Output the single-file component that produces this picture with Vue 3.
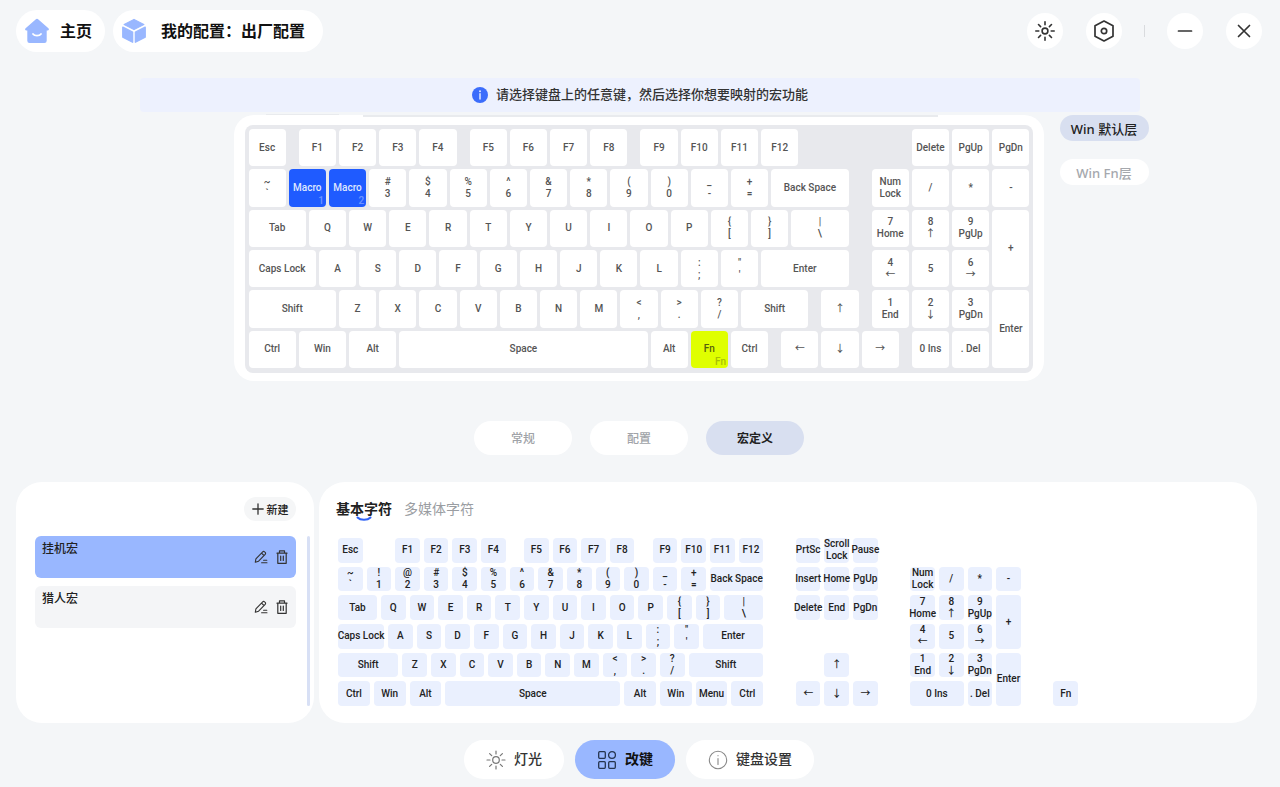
<template>
  <div class="page">
    <header class="topbar">
      <button class="pill home">
        <svg width="26" height="26" viewBox="0 0 26 26">
          <path d="M11.600 1.400a2 2 0 0 1 2.800 0l10 8.800c1 .9.5 2.200-.8 2.200h-.9v10.300a2.300 2.300 0 0 1-2.300 2.300H5.600a2.300 2.300 0 0 1-2.300-2.300V12.400h-.9c-1.300 0-1.800-1.300-.8-2.200z" fill="#99b7ff" />
          <path d="M9 16c1.500 2.200 6.500 2.200 8 0" fill="none" stroke="#fff" stroke-width="1.800" stroke-linecap="round" />
        </svg>
        <span>主页</span>
      </button>
      <button class="pill profile">
        <svg width="26" height="26" viewBox="0 0 26 26" fill="#99b7ff" stroke="#99b7ff" stroke-width="1.400" stroke-linejoin="round">
          <path d="M13 1.500l9.800 5L13 11.500 3.200 6.500z" />
          <path d="M1.800 9.200l9.800 5v10l-9.800-5z" />
          <path d="M24.200 9.200l-9.800 5v10l9.800-5z" />
        </svg>
        <span>我的配置：出厂配置</span>
      </button>
      <div class="window-btns">
        <button class="round" aria-label="主题">
          <svg width="20" height="20" viewBox="0 0 20 20" fill="none" stroke="#333" stroke-width="1.600" stroke-linecap="round">
            <circle cx="10" cy="10" r="2.900" />
            <path d="M10 .8v3M10 16.200v3M.8 10h3M16.200 10h3M3.500 3.500l2.100 2.100M14.400 14.400l2.100 2.100M3.500 16.500l2.100-2.100M14.400 5.600l2.100-2.100" />
          </svg>
        </button>
        <button class="round" aria-label="设置">
          <svg width="22" height="22" viewBox="0 0 22 22" fill="none" stroke="#333" stroke-width="1.700" stroke-linejoin="round">
            <path d="M11 1l9 4.800v10.400L11 21l-9-4.800V5.800z" />
            <circle cx="11" cy="11" r="2.700" />
          </svg>
        </button>
        <span class="divider"></span>
        <button class="round" aria-label="最小化">
          <svg width="16" height="16" viewBox="0 0 16 16" stroke="#333" stroke-width="1.700" stroke-linecap="round">
            <path d="M1.500 8h13" />
          </svg>
        </button>
        <button class="round" aria-label="关闭">
          <svg width="16" height="16" viewBox="0 0 16 16" stroke="#333" stroke-width="1.700" stroke-linecap="round">
            <path d="M2.500 2.500l11 11M13.500 2.500l-11 11" />
          </svg>
        </button>
      </div>
    </header>

    <div class="banner">
      <svg width="16" height="16" viewBox="0 0 16 16">
        <circle cx="8" cy="8" r="8" fill="#3c6dfb" />
        <circle cx="8" cy="4.300" r="1" fill="#dfe8ff" />
        <path d="M8 6.800v5.200" stroke="#dfe8ff" stroke-width="1.500" stroke-linecap="round" />
      </svg>
      <span>请选择键盘上的任意键，然后选择你想要映射的宏功能</span>
    </div>

    <section class="stage">
      <div class="case">
        <div class="board">
          <button
            v-for="(k, i) in mainKeys"
            :key="i"
            class="key"
            :class="k.type"
            :style="place(k)"
          >
            <span>{{ k.label }}</span><span v-if="k.tag" class="tag">{{ k.tag }}</span>
          </button>
        </div>
      </div>
      <div class="layers">
        <button
          v-for="l in layers"
          :key="l"
          :class="{ active: layer === l }"
          @click="layer = l"
        >
          {{ l }}
        </button>
      </div>
    </section>

    <div class="modes">
      <button v-for="m in modes" :key="m" :class="{ active: mode === m }" @click="mode = m">
        {{ m }}
      </button>
    </div>

    <div class="panels">
      <section class="panel macros">
        <button class="add">
          <svg width="12" height="12" viewBox="0 0 12 12" stroke="#333" stroke-width="1.300" stroke-linecap="round">
            <path d="M6 .8v10.400M.8 6h10.400" />
          </svg>
          <span>新建</span>
        </button>
        <div class="macro-body">
          <ul class="macro-list">
            <li
              v-for="m in macros"
              :key="m"
              :class="{ active: macro === m }"
              @click="macro = m"
            >
              <span class="name">{{ m }}</span>
              <button class="icon-btn" aria-label="编辑">
                <svg width="14" height="14" viewBox="0 0 14 14" fill="none" stroke="#333" stroke-width="1.100" stroke-linejoin="round" stroke-linecap="round">
                  <path d="M1.300 12.300l.6-3.500 6.800-7a1.300 1.300 0 0 1 1.900 0l.6.6a1.300 1.300 0 0 1 0 1.900l-6.600 6.900zM7.600 3.200l2.300 2.300M9.600 10.300h3.200M7.600 12.700h5.400" />
                </svg>
              </button>
              <button class="icon-btn" aria-label="删除">
                <svg width="14" height="14" viewBox="0 0 14 14" fill="none" stroke="#333" stroke-width="1.200" stroke-linejoin="round" stroke-linecap="round">
                  <path d="M2 3.200h10M4.500 3V.8h5V3M2.800 3.400v9.900h8.400V3.400M5.700 6v4.500M8.300 6v4.500" />
                </svg>
              </button>
            </li>
          </ul>
          <div class="scrollbar"></div>
        </div>
      </section>

      <section class="panel chars">
        <div class="char-tabs">
          <button
            v-for="t in charTabs"
            :key="t"
            :class="{ active: charTab === t }"
            @click="charTab = t"
          >
            {{ t }}
            <svg v-if="charTab === t" class="smile" width="16" height="6" viewBox="0 0 16 6">
              <path d="M1.500 1.500c3 3 10 3 13 0" fill="none" stroke="#2f62f5" stroke-width="2" stroke-linecap="round" />
            </svg>
          </button>
        </div>
        <div class="picker">
          <button v-for="(k, i) in pickerKeys" :key="i" class="key" :style="place(k)">
            <span>{{ k.label }}</span>
          </button>
        </div>
      </section>
    </div>

    <nav class="bottom">
      <button>
        <svg width="20" height="20" viewBox="0 0 20 20" fill="none" stroke="#777" stroke-width="1.200" stroke-linecap="round">
          <circle cx="10" cy="10" r="3.300" />
          <path d="M10 1v3M10 16v3M1 10h3M16 10h3M3.600 3.600l2.100 2.100M14.300 14.300l2.100 2.100M3.600 16.400l2.100-2.100M14.300 5.700l2.100-2.100" />
        </svg>
        <span>灯光</span>
      </button>
      <button class="active">
        <svg width="20" height="20" viewBox="0 0 20 20" fill="none" stroke="#26344f" stroke-width="1.300">
          <rect x="1.700" y="1.700" width="6.600" height="6.600" rx="1" />
          <circle cx="15" cy="5" r="3.400" />
          <rect x="1.700" y="11.700" width="6.600" height="6.600" rx="1" />
          <rect x="11.700" y="11.700" width="6.600" height="6.600" rx="1" />
        </svg>
        <span>改键</span>
      </button>
      <button>
        <svg width="20" height="20" viewBox="0 0 20 20" fill="none" stroke="#888" stroke-width="1.100" stroke-linecap="round">
          <circle cx="10" cy="10" r="8.700" />
          <path d="M10 8.500v6M10 5.500v.3" />
        </svg>
        <span>键盘设置</span>
      </button>
    </nav>
  </div>
</template>

<script setup>
import { ref } from 'vue'

const layers = ['Win 默认层', 'Win Fn层']
const layer = ref(layers[0])

const modes = ['常规', '配置', '宏定义']
const mode = ref('宏定义')

const macros = ['挂机宏', '猎人宏']
const macro = ref('挂机宏')

const charTabs = ['基本字符', '多媒体字符']
const charTab = ref('基本字符')

// a number is an empty gap, a string is a 1u key, an array is [label, width, options]
const mainRows = [
  ['Esc', 0.25, 'F1', 'F2', 'F3', 'F4', 0.25, 'F5', 'F6', 'F7', 'F8', 0.25, 'F9', 'F10', 'F11', 'F12', 2.75, 'Delete', 'PgUp', 'PgDn'],
  ['~\n`', ['Macro', 1, { type: 'macro', tag: '1' }], ['Macro', 1, { type: 'macro', tag: '2' }], '#\n3', '$\n4', '%\n5', '^\n6', '&\n7', '*\n8', '(\n9', ')\n0', '_\n-', '+\n=', ['Back Space', 2], 0.5, 'Num\nLock', '/', '*', '-'],
  [['Tab', 1.5], ...'QWERTYUIOP', '{\n[', '}\n]', ['|\n\\', 1.5], 0.5, '7\nHome', '8\n↑', '9\nPgUp', ['+', 1, { h: 2 }]],
  [['Caps Lock', 1.75], ...'ASDFGHJKL', ':\n;', '"\n\'', ['Enter', 2.25], 0.5, '4\n←', '5', '6\n→'],
  [['Shift', 2.25], ...'ZXCVBNM', '<\n,', '>\n.', '?\n/', ['Shift', 1.75], 0.25, '↑', 0.25, '1\nEnd', '2\n↓', '3\nPgDn', ['Enter', 1, { h: 2 }]],
  [['Ctrl', 1.25], ['Win', 1.25], ['Alt', 1.25], ['Space', 6.25], 'Alt', ['Fn', 1, { type: 'fn', tag: 'Fn' }], 'Ctrl', 0.25, '←', '↓', '→', 0.25, '0 Ins', '. Del'],
]

const pickerRows = [
  ['Esc', 1, 'F1', 'F2', 'F3', 'F4', 0.5, 'F5', 'F6', 'F7', 'F8', 0.5, 'F9', 'F10', 'F11', 'F12', 1, 'PrtSc', 'Scroll\nLock', 'Pause'],
  ['~\n`', '!\n1', '@\n2', '#\n3', '$\n4', '%\n5', '^\n6', '&\n7', '*\n8', '(\n9', ')\n0', '_\n-', '+\n=', ['Back Space', 2], 1, 'Insert', 'Home', 'PgUp', 1, 'Num\nLock', '/', '*', '-'],
  [['Tab', 1.5], ...'QWERTYUIOP', '{\n[', '}\n]', ['|\n\\', 1.5], 1, 'Delete', 'End', 'PgDn', 1, '7\nHome', '8\n↑', '9\nPgUp', ['+', 1, { h: 2 }]],
  [['Caps Lock', 1.75], ...'ASDFGHJKL', ':\n;', '"\n\'', ['Enter', 2.25], 5, '4\n←', '5', '6\n→'],
  [['Shift', 2.25], ...'ZXCVBNM', '<\n,', '>\n.', '?\n/', ['Shift', 2.75], 2, '↑', 2, '1\nEnd', '2\n↓', '3\nPgDn', ['Enter', 1, { h: 2 }]],
  [['Ctrl', 1.25], ['Win', 1.25], ['Alt', 1.25], ['Space', 6.25], ['Alt', 1.25], ['Win', 1.25], ['Menu', 1.25], ['Ctrl', 1.25], 1, '←', '↓', '→', 1, ['0 Ins', 2], '. Del', 2, 'Fn'],
]

function layout(rows) {
  const keys = []
  rows.forEach((row, y) => {
    let x = 0
    for (const item of row) {
      if (typeof item === 'number') {
        x += item
        continue
      }
      const [label, w, opts] = Array.isArray(item) ? item : [item, 1]
      keys.push({ label, x, y, w, h: 1, ...opts })
      x += w
    }
  })
  return keys
}

// one key unit is four grid columns
function place(k) {
  return {
    gridColumn: `${k.x * 4 + 1} / span ${k.w * 4}`,
    gridRow: `${k.y + 1} / span ${k.h}`,
  }
}

const mainKeys = layout(mainRows)
const pickerKeys = layout(pickerRows)
</script>

<style>
body {
  background: #f4f6f8;
}
</style>

<style scoped>
.page {
  min-height: 100vh;
  box-sizing: border-box;
  padding: 10px 0 8px;
  display: flex;
  flex-direction: column;
  font-family: "Noto Sans", "Noto Sans CJK SC", sans-serif;
  color: #222;
}
button {
  font-family: inherit;
  border: none;
  padding: 0;
  background: none;
  color: inherit;
  cursor: pointer;
}
svg {
  display: block;
  flex: none;
}

.topbar {
  display: flex;
  align-items: center;
  gap: 8px;
  padding: 0 18px 0 16px;
}
.pill {
  display: flex;
  align-items: center;
  height: 42px;
  border-radius: 21px;
  background: #fff;
  font-size: 16px;
  font-weight: 600;
  color: #111;
}
.pill span,
.banner span,
.bottom span {
  padding-bottom: 3px;
}
.home {
  gap: 10px;
  padding: 0 13px 0 8px;
}
.profile {
  gap: 14px;
  padding: 0 18px 0 8px;
}
.window-btns {
  display: flex;
  align-items: center;
  gap: 23px;
  margin-left: auto;
}
.round {
  width: 36px;
  height: 36px;
  border-radius: 50%;
  background: #fff;
  display: flex;
  align-items: center;
  justify-content: center;
}
.divider {
  width: 1px;
  height: 12px;
  background: #d9dbde;
  margin: 0 -1px;
}

.banner {
  width: 100%;
  max-width: 1000px;
  height: 34px;
  margin: 26px auto 3px;
  display: flex;
  align-items: center;
  justify-content: center;
  gap: 8px;
  border-radius: 4px;
  background: #edf1fe;
  font-size: 13px;
  font-weight: 500;
  color: #333;
}

.stage {
  display: grid;
  grid-template-columns: 1fr minmax(0, 810px) 1fr;
  column-gap: 16px;
  padding-right: 3px;
}
.case {
  grid-column: 2;
  position: relative;
  box-sizing: border-box;
  padding: 10px 11px 8px;
  border-radius: 20px;
  background: #fff;
}
.case::before,
.case::after {
  content: "";
  position: absolute;
  top: 0;
  left: 16%;
  right: 13%;
  height: 2px;
  background: #e9ebee;
}
.case::after {
  top: -1px;
  left: 4%;
  right: 87%;
  height: 1px;
}
.board {
  display: grid;
  grid-template-columns: repeat(78, minmax(0, 1fr));
  grid-template-rows: repeat(6, minmax(0, 1fr));
  height: 242px;
  padding: 3px 2px;
  border-radius: 8px;
  background: #e8e9ed;
}
.key {
  position: relative;
  display: flex;
  align-items: center;
  justify-content: center;
  font-family: Roboto, "Noto Sans CJK SC", sans-serif;
  font-size: 10px;
  font-weight: 500;
  line-height: 12px;
  white-space: pre;
  text-align: center;
}
.board .key {
  margin: 1px 1px 2px 2px;
  border-radius: 4px;
  background: #fff;
  color: #555;
}
.board .macro {
  background: #1f5bff;
  color: #dfe8ff;
}
.board .fn {
  background: #dfff00;
  color: #55600d;
}
.tag {
  position: absolute;
  right: 2px;
  bottom: 0;
  opacity: 0.4;
}
.layers {
  display: flex;
  flex-direction: column;
  align-items: flex-start;
  gap: 18px;
}
.layers button {
  width: 89px;
  height: 26px;
  border-radius: 13px;
  background: #fff;
  font-size: 13px;
  font-weight: 500;
  color: #a5a8ad;
}
.layers .active {
  background: #d8dff0;
  color: #222;
}

.modes {
  display: flex;
  justify-content: center;
  gap: 18px;
  margin: 40px 2px 27px 0;
}
.modes button {
  width: 98px;
  height: 34px;
  border-radius: 17px;
  background: #fff;
  font-size: 12px;
  font-weight: 500;
  color: #a0a3a8;
}
.modes .active {
  background: #d8dff0;
  color: #222;
  font-weight: 600;
}

.panels {
  display: flex;
  gap: 5px;
  padding: 0 23px 0 16px;
}
.panel {
  box-sizing: border-box;
  border-radius: 26px;
  background: #fff;
}
.macros {
  width: 298px;
  padding: 15px 4px 17px 19px;
  display: flex;
  flex-direction: column;
}
.add {
  align-self: flex-end;
  display: flex;
  align-items: center;
  justify-content: center;
  gap: 3px;
  width: 52px;
  height: 24px;
  margin: 0 14px 15px 0;
  border-radius: 12px;
  background: #f5f6f7;
  font-size: 11px;
  font-weight: 500;
}
.macro-body {
  flex: 1;
  display: flex;
  gap: 11px;
}
.macro-list {
  flex: 1;
  margin: 0;
  padding: 0;
  list-style: none;
  display: flex;
  flex-direction: column;
  gap: 8px;
}
.macro-list li {
  display: flex;
  align-items: center;
  gap: 7px;
  height: 42px;
  padding: 0 7px;
  border-radius: 6px;
  background: #f4f5f7;
}
.macro-list .active {
  background: #99b7ff;
}
.name {
  flex: 1;
  align-self: flex-start;
  padding-top: 4px;
  font-size: 12px;
  font-weight: 500;
  line-height: 18px;
}
.scrollbar {
  width: 3px;
  border-radius: 2px;
  background: #d8e0f5;
}

.chars {
  flex: 1;
  min-width: 0;
  padding: 17px 17px 15px;
}
.char-tabs {
  display: flex;
  gap: 12px;
  margin-bottom: 17px;
}
.char-tabs button {
  position: relative;
  height: 20px;
  font-size: 14px;
  line-height: 20px;
  color: #9a9da2;
}
.char-tabs .active {
  color: #222;
  font-weight: 600;
}
.smile {
  position: absolute;
  left: 50%;
  bottom: -3px;
  margin-left: -8px;
}
.picker {
  display: grid;
  grid-template-columns: repeat(104, minmax(0, 1fr));
  grid-template-rows: repeat(6, minmax(0, 1fr));
  max-width: 744px;
  height: 172px;
}
.picker .key {
  margin: 2px;
  border-radius: 4px;
  background: #eaf0fe;
  color: #222;
}

.bottom {
  display: flex;
  justify-content: center;
  gap: 11px;
  margin-top: 17px;
  padding-right: 2px;
}
.bottom button {
  display: flex;
  align-items: center;
  gap: 8px;
  height: 39px;
  padding: 0 22px;
  border-radius: 20px;
  background: #fff;
  font-size: 14px;
  font-weight: 500;
  color: #333;
}
.bottom .active {
  background: #99b7ff;
  color: #111;
  font-weight: 600;
}
</style>
